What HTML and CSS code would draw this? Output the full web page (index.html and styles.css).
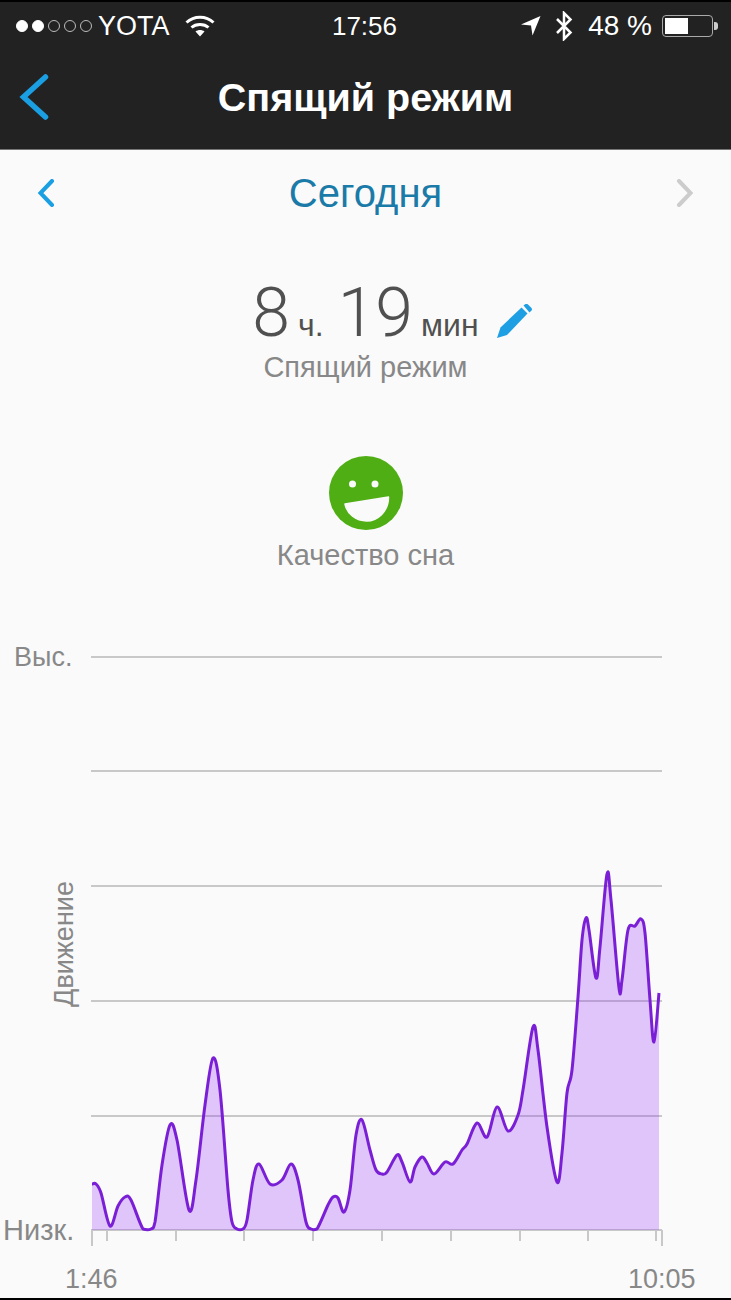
FILE: index.html
```html
<!DOCTYPE html>
<html lang="ru">
<head>
    <meta charset="UTF-8">
    <meta name="viewport" content="width=device-width, initial-scale=1.0">
    <title>Спящий режим</title>
    <link rel="stylesheet" href="styles.css">
</head>
<body>
    <header class="top">
        <div class="status">
            <div class="status-left">
                <span class="signal">
                    <i class="dot on"></i><i class="dot on"></i><i class="dot"></i><i class="dot"></i><i class="dot"></i>
                </span>
                <span class="carrier">YOTA</span>
                <svg class="wifi" width="30" height="22" viewBox="0 0 30 22">
                    <path d="M1.5 7.5C9 .5 21 .5 28.500 7.500" fill="none" stroke="#fff" stroke-width="3"/>
                    <path d="M6.500 12.500C11 8.500 19 8.500 23.500 12.500" fill="none" stroke="#fff" stroke-width="3"/>
                    <path d="M10.500 16.500L15 21.500L19.500 16.500C17 14.500 13 14.500 10.500 16.500Z" fill="#fff"/>
                </svg>
            </div>
            <span class="time">17:56</span>
            <div class="status-right">
                <svg class="arrow" width="20" height="20" viewBox="0 0 20 20">
                    <path d="M0 8.500L19.500 0L11.500 19.500L10 9.500Z" fill="#fff"/>
                </svg>
                <svg class="bt" width="18" height="30" viewBox="0 0 18 30">
                    <path d="M2 8L15.500 21.500L9 28V2L15.500 8.500L2 22" fill="none" stroke="#fff" stroke-width="2.500"/>
                </svg>
                <span class="percent">48 %</span>
                <div class="battery"><div class="battery-level"></div></div>
                <div class="battery-nub"></div>
            </div>
        </div>
        <div class="nav">
            <svg class="nav-back" width="30" height="46" viewBox="0 0 30 46">
                <path d="M26.500 3L4.500 23L26.500 43" fill="none" stroke="#1a9fe3" stroke-width="5.500" stroke-linecap="round" stroke-linejoin="miter"/>
            </svg>
            <h1 class="nav-title">Спящий режим</h1>
        </div>
    </header>

    <div class="day">
        <svg width="18" height="28" viewBox="0 0 18 28">
            <path d="M15 2L3.500 14L15 26" fill="none" stroke="#1a9fe3" stroke-width="4" stroke-linecap="round"/>
        </svg>
        <span class="day-name">Сегодня</span>
        <svg width="18" height="28" viewBox="0 0 18 28">
            <path d="M3 2L14.500 14L3 26" fill="none" stroke="#cccccc" stroke-width="4" stroke-linecap="round"/>
        </svg>
    </div>

    <section class="summary">
        <div class="duration">
            <span class="big">8</span><span class="unit">ч.</span><span class="big">19</span><span class="unit last">мин</span>
            <svg class="pencil" width="36" height="35" viewBox="0 0 36 35">
                <path d="M0 34L3.500 23.500L24.500 3.500L30.500 9.500L10 31Z" fill="#1e9fe3"/>
                <path d="M26.500 1.500L28.500 0Q30 -.5 31 .5L34.500 4Q35.500 5.500 34.500 6.500L32.500 8.500Z" fill="#1e9fe3"/>
            </svg>
        </div>
        <p class="caption">Спящий режим</p>
    </section>

    <section class="quality">
        <svg width="74" height="74" viewBox="0 0 74 74">
            <circle cx="37" cy="37" r="37" fill="#4fae14"/>
            <circle cx="23.500" cy="28" r="3.500" fill="#fafafa"/>
            <circle cx="46" cy="28" r="3.500" fill="#fafafa"/>
            <path d="M16 48L59.500 41C59.500 56 48 65 37.700 65C27 65 18 58 16 48Z" fill="#fafafa" stroke="#fafafa" stroke-width="1.500" stroke-linejoin="round"/>
        </svg>
        <p class="caption">Качество сна</p>
    </section>

    <svg class="chart" width="731" height="658" viewBox="0 640 731 658">
        <g class="grid">
            <path d="M91 657H662"/>
            <path d="M91 771H662"/>
            <path d="M91 886H662"/>
            <path d="M91 1001H662"/>
            <path d="M91 1116H662"/>
            <path d="M91 1230H662"/>
        </g>
        <g class="ticks">
            <path d="M92 1230V1246"/>
            <path d="M107 1230V1241"/>
            <path d="M176 1230V1241"/>
            <path d="M244 1230V1241"/>
            <path d="M313 1230V1241"/>
            <path d="M382 1230V1241"/>
            <path d="M451 1230V1241"/>
            <path d="M520 1230V1241"/>
            <path d="M588 1230V1241"/>
            <path d="M656 1230V1241"/>
            <path d="M662 1230V1246"/>
        </g>
        <path id="area" class="area"/>
        <path id="line" class="line"/>
        <text class="label" x="14" y="666">Выс.</text>
        <text class="label wide" x="3" y="1240">Низк.</text>
        <text class="label" x="73" y="944" text-anchor="middle" transform="rotate(-90 73 944)">Движение</text>
        <text class="label" x="65" y="1288">1:46</text>
        <text class="label" x="628" y="1288">10:05</text>
    </svg>
    <script src="script.js"></script>
</body>
</html>
```

FILE: styles.css
```css
body {
    margin: 0;
    width: 731px;
    height: 1300px;
    overflow: hidden;
    box-sizing: border-box;
    border-bottom: 2px solid #000;
    background-color: #fafafa;
    font-family: "Liberation Sans", Arial, sans-serif;
}

p {
    margin: 0;
}

/* top bar */
.top {
    height: 150px;
    box-sizing: border-box;
    background-color: #222;
    border-top: 2px solid #000;
    border-bottom: 1px solid #777;
    color: #fff;
}

.status {
    display: grid;
    grid-template-columns: 1fr auto 1fr;
    align-items: center;
    height: 48px;
    font-size: 26px;
}

.status-left {
    display: flex;
    align-items: center;
    padding-left: 16px;
}

.status-right {
    display: flex;
    align-items: center;
    justify-content: flex-end;
    padding-right: 13px;
}

.signal {
    display: flex;
    gap: 4px;
}

.dot {
    width: 12px;
    height: 12px;
    box-sizing: border-box;
    border: 1px solid #bbb;
    border-radius: 50%;
}

.dot.on {
    background-color: #fff;
    border-color: #fff;
}

.carrier {
    margin-left: 6px;
    font-size: 27px;
}

.wifi {
    margin-left: 15px;
}

.time {
    margin-left: -2px;
}

.arrow {
    margin-right: 14px;
}

.percent {
    margin: 0 10px 0 15px;
    font-size: 28px;
}

.battery {
    width: 51px;
    height: 22px;
    box-sizing: border-box;
    padding: 2px;
    border: 1px solid #aaa;
    border-radius: 4px;
}

.battery-level {
    width: 23px;
    height: 100%;
    background-color: #fff;
}

.battery-nub {
    width: 4px;
    height: 8px;
    margin-left: 1px;
    background-color: #ccc;
    border-radius: 0 3px 3px 0;
}

.nav {
    position: relative;
    height: 99px;
}

.nav-back {
    position: absolute;
    left: 19px;
    top: 24px;
}

.nav-title {
    margin: 0;
    padding-top: 23px;
    text-align: center;
    font-size: 39.5px;
    line-height: 48px;
    font-weight: 700;
}

/* day switcher */
.day {
    display: flex;
    align-items: center;
    justify-content: space-between;
    height: 86px;
    padding: 0 37px;
}

.day-name {
    font-size: 40px;
    color: #1a7ba8;
}

/* sleep time */
.summary {
    margin-top: 35px;
    text-align: center;
}

.duration {
    display: flex;
    align-items: baseline;
    justify-content: center;
    height: 80px;
    color: #505050;
}

.big {
    font-family: Roboto, "Liberation Sans", sans-serif;
    font-weight: 300;
    font-size: 68px;
    line-height: 84px;
}

.unit {
    margin: 0 14px 0 8px;
    font-size: 32px;
}

.unit.last {
    margin-right: 0;
}

.pencil {
    align-self: center;
    margin: 20px -54px 0 18px;
}

.caption {
    font-size: 29px;
    line-height: 32px;
    color: #888;
}

.quality {
    margin-top: 73px;
    text-align: center;
}

.quality svg {
    display: block;
    margin: 0 auto 9px;
}

/* chart */
.chart {
    display: block;
    margin-top: 69px;
}

.grid path {
    stroke: #c8c8c8;
    stroke-width: 2;
}

.ticks path {
    stroke: #c8c8c8;
    stroke-width: 2;
}

.area {
    fill: rgba(145, 40, 250, 0.25);
}

.line {
    fill: none;
    stroke: #7a1fd6;
    stroke-width: 3;
    stroke-linejoin: round;
}

.label {
    font-size: 27px;
    fill: #888;
}

.label.wide {
    font-size: 29px;
}
```

FILE: script.js
```js
// punkty wykresu ruchu (x, y)
var points = [
    [92,1184],[96,1184],[101,1193],[110,1226],[118,1206],[125,1197],[131,1200],[143,1229],[151,1229],[155,1222],
    [162,1165],[170,1125],[177,1140],[189,1210],[196,1180],[205,1105],[213,1058],[220,1090],[228,1190],[232,1222],
    [237,1229],[243,1229],[247,1220],[253,1180],[259,1164],[270,1184],[282,1180],[291,1164],[298,1180],[306,1222],
    [311,1229],[317,1229],[328,1205],[333,1197],[338,1198],[344,1212],[350,1190],[356,1135],[362,1120],[370,1150],
    [376,1170],[382,1174],[387,1172],[397,1155],[402,1162],[410,1182],[415,1167],[422,1157],[427,1163],[434,1174],
    [445,1162],[453,1164],[462,1150],[467,1144],[477,1123],[487,1137],[497,1107],[508,1131],[518,1115],[523,1090],
    [533,1027],[538,1050],[547,1127],[557,1182],[562,1153],[567,1093],[572,1070],[578,997],[582,940],
    [586,918],[589,930],[596,978],[600,947],[607,874],[611,900],[619,988],[622,980],[628,930],[635,926],
    [641,919],[645,933],[650,1000],[654,1042],[659,993]
];

function smoothPath(pts) {
    var d = "M" + pts[0][0] + " " + pts[0][1];
    for (var i = 0; i < pts.length - 1; i++) {
        var p0 = pts[Math.max(i - 1, 0)];
        var p1 = pts[i];
        var p2 = pts[i + 1];
        var p3 = pts[Math.min(i + 2, pts.length - 1)];
        var c1x = p1[0] + (p2[0] - p0[0]) / 6;
        var c1y = Math.min(p1[1] + (p2[1] - p0[1]) / 6, 1230);
        var c2x = p2[0] - (p3[0] - p1[0]) / 6;
        var c2y = Math.min(p2[1] - (p3[1] - p1[1]) / 6, 1230);
        d += "C" + c1x + " " + c1y + " " + c2x + " " + c2y + " " + p2[0] + " " + p2[1];
    }
    return d;
}

var d = smoothPath(points);
document.getElementById("line").setAttribute("d", d);
document.getElementById("area").setAttribute("d", d + "V1230H92Z");
```
